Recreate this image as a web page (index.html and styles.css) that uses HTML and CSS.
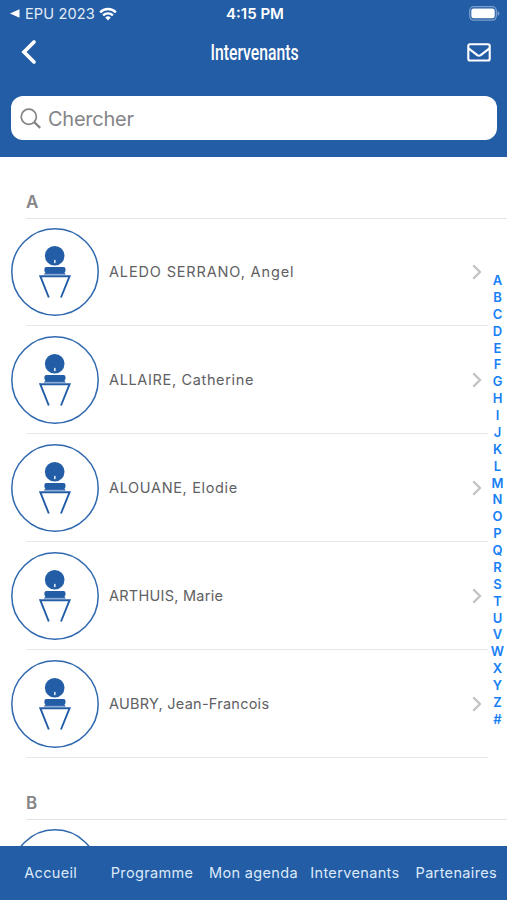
FILE: index.html
```html
<!DOCTYPE html>
<html lang="fr">
<head>
<meta charset="utf-8">
<title>Intervenants</title>
<link rel="stylesheet" href="styles.css">
</head>
<body>
<svg class="defs" aria-hidden="true">
  <symbol id="speaker" viewBox="0 0 88 88">
    <circle cx="44" cy="44" r="43.2" fill="#fff" stroke="#2f68ae" stroke-width="1.5"/>
    <circle cx="43.700" cy="27.800" r="9.800" fill="#235da5"/>
    <rect x="43" y="31.800" width="1.600" height="3.400" rx=".6" fill="#e4eefb"/>
    <path d="M35.500 39h17q2 0 2 2v1.500q0 1-1 2l1.200 2H32.800l1.600-2q-1-1-1-2V41q0-2 2.100-2z" fill="#235da5"/>
    <path d="M34 46.300h20" stroke="#8fb0dc" stroke-width=".7"/>
    <path d="M37.800 69.500 29.300 48.200h29.300L50 69.500" fill="none" stroke="#235da5" stroke-width="1.900"/>
  </symbol>
  <symbol id="next" viewBox="0 0 10 16">
    <path d="m1.300 1.400 6.700 6.600-6.700 6.600" fill="none" stroke="#c3c3c5" stroke-width="2.300"/>
  </symbol>
</svg>
<div class="screen">
  <header class="top">
    <div class="status">
      <div class="status-left">
        <svg width="10" height="9" viewBox="0 0 10 9"><path d="M0 4.500 9.500.3v8.400z" fill="#fff"/></svg>
        <span class="back-app">EPU 2023</span>
        <svg width="18" height="14" viewBox="0 0 19 14"><g fill="none" stroke="#fff" stroke-width="2.500"><path d="M1.200 5.200a11.700 11.700 0 0 1 16.600 0"/><path d="M4.300 8.500a7.300 7.300 0 0 1 10.400 0"/></g><path d="M9.500 13.800 6.600 10.800a4.100 4.100 0 0 1 5.800 0z" fill="#fff"/></svg>
      </div>
      <span class="time">4:15 PM</span>
      <svg class="battery" width="31" height="15" viewBox="0 0 31 15"><rect x=".7" y=".7" width="26.600" height="13.400" rx="4" fill="none" stroke="#7c9fce" stroke-width="1.300"/><rect x="2.300" y="2.500" width="23.400" height="9.800" rx="2.200" fill="#fff"/><path d="M28.500 5q2 .7 2 2.400t-2 2.400z" fill="#7c9fce"/></svg>
    </div>
    <div class="nav">
      <svg width="16" height="26" viewBox="0 0 16 26"><path d="M13 3 3 13l10 10" fill="none" stroke="#fff" stroke-width="3.700" stroke-linecap="round" stroke-linejoin="miter"/></svg>
      <h1>Intervenants</h1>
      <svg width="24" height="19" viewBox="0 0 24 19"><g fill="none" stroke="#fff" stroke-width="2.100" stroke-linejoin="round"><rect x="1.300" y="1.300" width="21.400" height="16.200" rx="1.800"/><path d="m1.500 5.300 8.800 6.900q1.700 1.200 3.400 0l8.800-6.900"/></g></svg>
    </div>
    <div class="search">
      <svg width="22" height="22" viewBox="0 0 22 22"><circle cx="8.800" cy="8.700" r="7.600" fill="none" stroke="#858588" stroke-width="1.700"/><path d="m14.200 14.200 6 5.600" stroke="#858588" stroke-width="2.300"/></svg>
      <span>Chercher</span>
    </div>
  </header>
  <main class="list">
    <h2>A</h2>
    <ul>
      <li><svg class="avatar"><use href="#speaker"/></svg><span class="name widest">ALEDO SERRANO, Angel</span><svg class="next"><use href="#next"/></svg></li>
      <li><svg class="avatar"><use href="#speaker"/></svg><span class="name wide">ALLAIRE, Catherine</span><svg class="next"><use href="#next"/></svg></li>
      <li><svg class="avatar"><use href="#speaker"/></svg><span class="name wide">ALOUANE, Elodie</span><svg class="next"><use href="#next"/></svg></li>
      <li><svg class="avatar"><use href="#speaker"/></svg><span class="name">ARTHUIS, Marie</span><svg class="next"><use href="#next"/></svg></li>
      <li><svg class="avatar"><use href="#speaker"/></svg><span class="name">AUBRY, Jean-Francois</span><svg class="next"><use href="#next"/></svg></li>
    </ul>
    <h2>B</h2>
    <ul>
      <li><svg class="avatar"><use href="#speaker"/></svg></li>
    </ul>
  </main>
  <nav class="index">
    <span>A</span><span>B</span><span>C</span><span>D</span><span>E</span><span>F</span><span>G</span><span>H</span><span>I</span><span>J</span><span>K</span><span>L</span><span>M</span><span>N</span><span>O</span><span>P</span><span>Q</span><span>R</span><span>S</span><span>T</span><span>U</span><span>V</span><span>W</span><span>X</span><span>Y</span><span>Z</span><span>#</span>
  </nav>
  <footer class="tabs">
    <span>Accueil</span><span>Programme</span><span>Mon agenda</span><span>Intervenants</span><span>Partenaires</span>
  </footer>
</div>
</body>
</html>
```
FILE: styles.css
```css
* { box-sizing: border-box; }
body { margin: 0; font-family: Inter, "Liberation Sans", sans-serif; }
svg { display: block; flex: none; }
.defs { position: absolute; width: 0; height: 0; }
.screen {
  position: relative;
  display: flex;
  flex-direction: column;
  width: 507px;
  height: 900px;
  overflow: hidden;
  background: #fff;
}
.top { flex: none; height: 157px; background: #235da5; color: #fff; }
.status {
  display: grid;
  grid-template-columns: 1fr auto 1fr;
  align-items: center;
  height: 27px;
  padding: 0 7px 0 10px;
}
.status-left { display: flex; align-items: center; }
.back-app { width: 69px; margin: 0 5px 0 5px; font-size: 14.6px; letter-spacing: 0.1px; white-space: nowrap; color: #e3ecf8; }
.time { font-size: 15px; font-weight: 600; }
.battery { justify-self: end; }
.nav {
  display: grid;
  grid-template-columns: 1fr auto 1fr;
  align-items: center;
  height: 50px;
  padding: 0 16px 0 21px;
}
.nav h1 { margin: 0 1px 0 -2px; padding-top: 2px; font: 500 22px/28px Roboto, sans-serif; transform: scaleX(0.715); }
.nav svg:last-child { justify-self: end; }
.search {
  display: flex;
  align-items: center;
  gap: 6px;
  height: 44px;
  margin: 19px 10px 0 11px;
  padding: 1px 0 0 9px;
  border-radius: 12px;
  background: #fff;
  color: #858588;
  font-size: 20px;
  letter-spacing: -0.25px;
}
.list { flex: 1; min-height: 0; overflow: hidden; }
.list h2 {
  height: 62px;
  margin: 0 0 -1px 26px;
  padding-top: 33px;
  border-bottom: 1px solid #e4e4e6;
  color: #858587;
  font: 600 17px/24px Inter, sans-serif;
}
.list ul { margin: 0; padding: 0; list-style: none; }
.list li {
  display: flex;
  align-items: center;
  height: 108px;
  padding: 0 25px 0 11px;
  background: linear-gradient(#e8e8ea, #e8e8ea) 26px 100% / 462px 1px no-repeat;
}
.avatar { width: 88px; height: 88px; }
.name { flex: 1; margin-left: 10px; padding-bottom: 2px; color: #606062; font-size: 14.5px; letter-spacing: 0.25px; }
.name.wide { letter-spacing: 0.65px; }
.name.widest { letter-spacing: 0.85px; }
.next { width: 10px; height: 16px; }
.index {
  position: absolute;
  top: 272px;
  right: 0;
  display: flex;
  flex-direction: column;
  width: 19px;
  text-align: center;
  color: #1680f5;
  font-size: 13px;
  font-weight: 600;
  line-height: 16.88px;
}
.tabs {
  display: grid;
  grid-template-columns: repeat(5, 1fr);
  flex: none;
  height: 54px;
  background: #235da5;
  color: #dce9fa;
  font-size: 14.5px;
  line-height: 53px;
  letter-spacing: 0.35px;
  text-align: center;
  white-space: nowrap;
}
```
